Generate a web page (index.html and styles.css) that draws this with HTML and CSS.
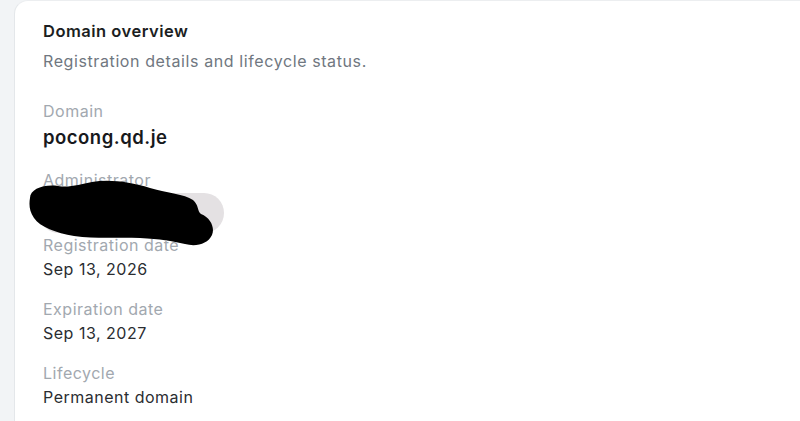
FILE: index.html
```html
<!DOCTYPE html>
<html lang="en">
<head>
<meta charset="utf-8">
<title>Domain overview</title>
<link rel="stylesheet" href="styles.css">
</head>
<body>
<main class="card">
  <h2 class="title">Domain overview</h2>
  <p class="subtitle">Registration details and lifecycle status.</p>
  <dl class="fields">
    <div class="field">
      <dt class="label">Domain</dt>
      <dd class="value value-strong">pocong.qd.je</dd>
    </div>
    <div class="field field-admin">
      <dt class="label">Administrator</dt>
      <dd class="value"><span class="chip">&nbsp;</span></dd>
      <svg class="redact" width="200" height="70" viewBox="25 180 200 70" aria-hidden="true">
        <path d="M 30 198 C 30 189, 44 184, 58 186 C 70 188, 80 184, 92 182 C 110 179, 130 182, 150 188 C 168 193, 184 194, 193 200 C 199 205, 197 211, 201 214 C 211 218, 215 228, 212 235 C 208 244, 196 247, 185 244 C 172 241, 160 239, 140 238 C 118 237, 96 239, 74 236 C 56 233, 40 227, 34 218 C 29 211, 29 204, 30 198 Z" fill="#000"/>
      </svg>
    </div>
    <div class="field">
      <dt class="label">Registration date</dt>
      <dd class="value">Sep 13, 2026</dd>
    </div>
    <div class="field">
      <dt class="label">Expiration date</dt>
      <dd class="value">Sep 13, 2027</dd>
    </div>
    <div class="field">
      <dt class="label">Lifecycle</dt>
      <dd class="value">Permanent domain</dd>
    </div>
  </dl>
</main>
</body>
</html>
```

FILE: styles.css
```css
html, body {
  margin: 0;
  padding: 0;
  height: 100%;
}
body {
  background: #f2f4f6;
  font-family: "Inter", "Noto Sans", sans-serif;
  overflow: hidden;
}
.card {
  margin-left: 14px;
  min-height: 100%;
  box-sizing: border-box;
  background: #ffffff;
  border-left: 1px solid #e4e7ea;
  border-top: 1px solid #eceef0;
  border-top-left-radius: 14px;
  padding: 19px 28px 0 28px;
}
.title {
  margin: 0;
  font-size: 16.5px;
  font-weight: 600;
  letter-spacing: 0.5px;
  color: #1b1e22;
  line-height: 22px;
}
.subtitle {
  margin: 8px 0 0;
  font-size: 16px;
  letter-spacing: 0.6px;
  color: #707780;
  line-height: 22px;
}
.fields {
  margin: 28px 0 0;
  display: flex;
  flex-direction: column;
  gap: 18px;
}
.field {
  display: flex;
  flex-direction: column;
  gap: 2px;
  position: relative;
}
.label {
  font-size: 16px;
  letter-spacing: 0.5px;
  line-height: 22px;
  color: #a2a8af;
}
.value {
  margin: 0;
  font-size: 16px;
  letter-spacing: 0.5px;
  line-height: 22px;
  color: #2a2d31;
}
.value-strong {
  font-size: 18.5px;
  font-weight: 600;
  letter-spacing: 0.5px;
  line-height: 27px;
  color: #17191c;
}
.chip {
  display: block;
  width: 185px;
  height: 40px;
  margin-left: -4px;
  border-radius: 20px;
  background: #e4e1e3;
}
.field-admin .value {
  margin-bottom: -17px;
}
.redact {
  position: absolute;
  left: -18px;
  top: 11px;
}
```
